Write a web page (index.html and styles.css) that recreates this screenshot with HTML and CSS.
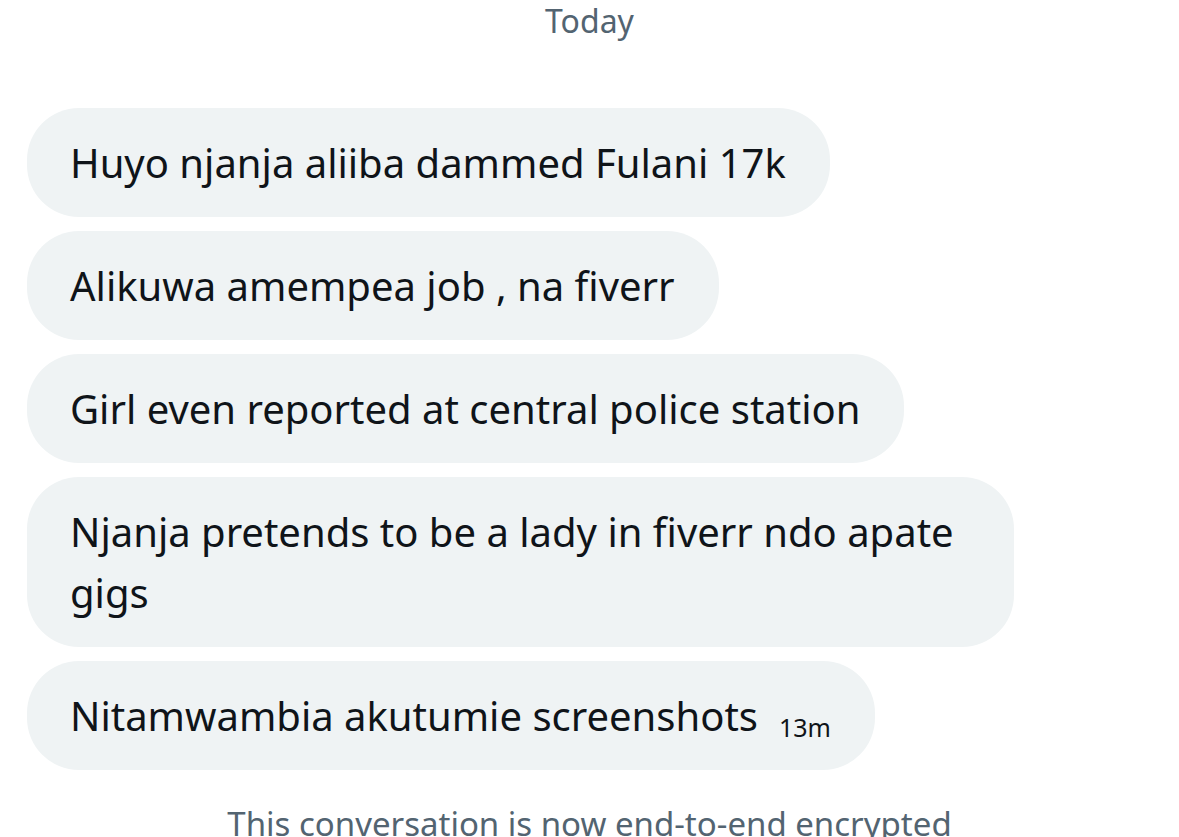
FILE: index.html
```html
<!DOCTYPE html>
<html>
<head>
<meta charset="utf-8">
<link rel="stylesheet" href="styles.css">
</head>
<body>
<div class="chat">
  <div class="day">Today</div>
  <div class="msgs">
    <div class="bubble">Huyo njanja aliiba dammed Fulani 17k</div>
    <div class="bubble">Alikuwa amempea job , na fiverr</div>
    <div class="bubble">Girl even reported at central police station</div>
    <div class="bubble wide">Njanja pretends to be a lady in fiverr ndo apate gigs</div>
    <div class="bubble">Nitamwambia akutumie screenshots<span class="time">13m</span></div>
  </div>
  <div class="notice">This conversation is now end-to-end encrypted</div>
</div>
</body>
</html>
```
FILE: styles.css
```css
html, body {
  margin: 0;
  padding: 0;
  background: #ffffff;
}
.chat {
  width: 1179px;
  height: 837px;
  overflow: hidden;
  font-family: "Noto Sans", "Open Sans", sans-serif;
}
.day {
  text-align: center;
  color: #536471;
  font-size: 32px;
  line-height: 44px;
  margin-top: -1px;
}
.msgs {
  display: flex;
  flex-direction: column;
  align-items: flex-start;
  gap: 14px;
  padding: 65px 0 0 27px;
}
.bubble {
  background: #eff3f4;
  color: #0f1419;
  font-size: 40px;
  line-height: 61px;
  padding: 24px 44px 24px 43px;
  border-radius: 52px;
  box-sizing: border-box;
}
.bubble.wide {
  max-width: 987px;
}
.time {
  display: inline-block;
  font-size: 25px;
  line-height: 1;
  margin-left: 21px;
  vertical-align: -6px;
}
.notice {
  text-align: center;
  color: #536471;
  font-size: 33px;
  line-height: 40px;
  margin-top: 34px;
  white-space: nowrap;
}
```
